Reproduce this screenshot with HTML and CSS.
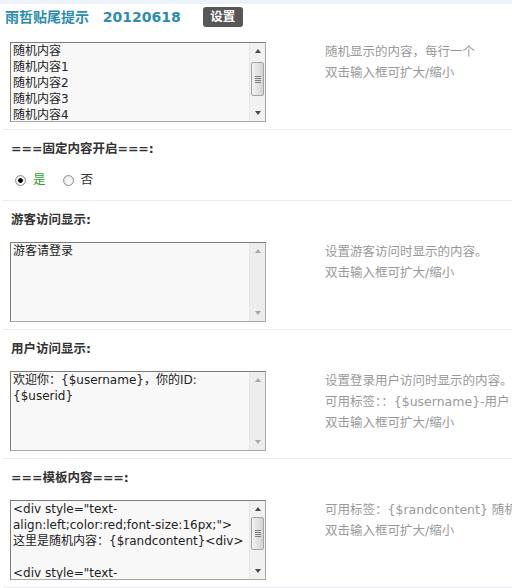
FILE: index.html
```html
<!DOCTYPE html>
<html lang="zh-CN">
<head>
<meta charset="utf-8">
<title>雨哲贴尾提示</title>
<link rel="stylesheet" href="styles.css">
</head>
<body>
<div class="topbar"></div>
<div class="header">
  <h3 class="title">雨哲贴尾提示 20120618</h3>
  <a class="btn" href="#">设置</a>
</div>

<div class="form">
  <div class="row-input first">
    <div class="ta">
      <textarea>随机内容
随机内容1
随机内容2
随机内容3
随机内容4
随机内容5</textarea>
      <div class="sb">
        <div class="sb-btn"><span class="arrow up"></span></div>
        <div class="track"><div class="thumb" style="margin-top:3px;height:34px"><i class="grip"></i><i class="grip"></i><i class="grip"></i><i class="grip"></i></div></div>
        <div class="sb-btn"><span class="arrow down"></span></div>
      </div>
    </div>
    <div class="tips">随机显示的内容，每行一个<br>双击输入框可扩大/缩小</div>
  </div>

  <div class="sec">
    <div class="label">===固定内容开启===:</div>
    <div class="radios">
      <label class="opt on"><input type="radio" name="fixed" checked>是</label>
      <label class="opt"><input type="radio" name="fixed">否</label>
    </div>
  </div>

  <div class="sec">
    <div class="label">游客访问显示:</div>
    <div class="row-input">
      <div class="ta">
        <textarea>游客请登录</textarea>
        <div class="sb off">
          <div class="sb-btn"><span class="arrow up"></span></div>
          <div class="track"></div>
          <div class="sb-btn"><span class="arrow down"></span></div>
        </div>
      </div>
      <div class="tips">设置游客访问时显示的内容。<br>双击输入框可扩大/缩小</div>
    </div>
  </div>

  <div class="sec">
    <div class="label">用户访问显示:</div>
    <div class="row-input">
      <div class="ta">
        <textarea>欢迎你：{$username}，你的ID: {$userid}</textarea>
        <div class="sb off">
          <div class="sb-btn"><span class="arrow up"></span></div>
          <div class="track"></div>
          <div class="sb-btn"><span class="arrow down"></span></div>
        </div>
      </div>
      <div class="tips">设置登录用户访问时显示的内容。<br>可用标签：：{$username}-用户<br>双击输入框可扩大/缩小</div>
    </div>
  </div>

  <div class="sec">
    <div class="label">===模板内容===:</div>
    <div class="row-input">
      <div class="ta">
        <textarea>&lt;div style="text-align:left;color:red;font-size:16px;"&gt;
这里是随机内容：{$randcontent}&lt;div&gt;

&lt;div style="text-align:left;color:blue;font-size:14px;"&gt;
{$randcontent}&lt;div&gt;</textarea>
        <div class="sb">
          <div class="sb-btn"><span class="arrow up"></span></div>
          <div class="track"><div class="thumb" style="margin-top:0;height:33px"><i class="grip"></i><i class="grip"></i><i class="grip"></i><i class="grip"></i></div></div>
          <div class="sb-btn"><span class="arrow down"></span></div>
        </div>
      </div>
      <div class="tips">可用标签：{$randcontent} 随机<br>双击输入框可扩大/缩小</div>
    </div>
  </div>
  <div class="sec"></div>
</div>
</body>
</html>
```

FILE: styles.css
```css
* { box-sizing: border-box; }
html, body {
  margin: 0;
  padding: 0;
  background: #fff;
  overflow: hidden;
}
body {
  width: 512px;
  height: 588px;
  font-family: "DejaVu Sans", "Noto Sans CJK SC", sans-serif;
  font-size: 12.5px;
  color: #333;
}

.topbar {
  height: 4px;
  background: #edf2f9;
}

.header {
  display: flex;
  align-items: center;
  height: 20px;
  margin-top: 3px;
  padding-left: 5px;
}
.title {
  margin: 0;
  font-size: 14px;
  font-weight: bold;
  line-height: 20px;
  color: #2b8cb0;
  word-spacing: 9px;
  white-space: nowrap;
}
.btn {
  margin-left: 22px;
  width: 40px;
  height: 20px;
  border-radius: 3px;
  background: #575757;
  color: #fff;
  font-weight: bold;
  font-size: 12.5px;
  line-height: 20px;
  text-align: center;
  text-decoration: none;
}

.form {
  margin-left: 3px;
}
.sec {
  border-top: 1px solid #e8ebef;
}
.label {
  padding: 11px 0 0 8px;
  line-height: 16px;
  font-weight: bold;
  color: #333;
  white-space: nowrap;
}

.row-input {
  display: flex;
  align-items: flex-start;
  padding: 14px 0 7px 7px;
}
.row-input.first {
  padding-top: 15px;
}

.ta {
  flex: none;
  display: flex;
  width: 256px;
  height: 80px;
  border: 1px solid;
  border-color: #7c7c7c #a9a9a9 #a9a9a9 #7c7c7c;
  background: #f8f8f8;
}
.ta textarea {
  flex: 1;
  min-width: 0;
  margin: 0;
  border: 0;
  padding: 0 1px 0 2px;
  background: transparent;
  resize: none;
  overflow: hidden;
  outline: none;
  font-family: "DejaVu Sans", "Noto Sans CJK SC", sans-serif;
  font-size: 12px;
  line-height: 16px;
  color: #222;
}

.sb {
  flex: none;
  width: 16px;
  display: flex;
  flex-direction: column;
  background: #f1f1f1;
  border-left: 1px solid #e6e6e6;
}
.sb.off {
  background: #ededed;
}
.sb-btn {
  height: 16px;
  display: flex;
  align-items: center;
  justify-content: center;
}
.arrow {
  width: 0;
  height: 0;
  border-left: 3px solid transparent;
  border-right: 3px solid transparent;
}
.arrow.up { border-bottom: 4px solid #4a4a4a; }
.arrow.down { border-top: 4px solid #4a4a4a; }
.sb.off .arrow.up { border-bottom-color: #a8a8a8; }
.sb.off .arrow.down { border-top-color: #a8a8a8; }

.track {
  flex: 1;
  padding: 0 1px;
}
.thumb {
  display: flex;
  flex-direction: column;
  align-items: center;
  justify-content: center;
  gap: 1px;
  border: 1px solid #a3a3a3;
  border-radius: 2px;
  background: linear-gradient(to right, #f2f2f2, #d3d3d3);
}
.grip {
  display: block;
  width: 6px;
  height: 1px;
  background: #7e7e7e;
}

.tips {
  flex: 1;
  min-width: 0;
  margin-left: 59px;
  margin-top: -1px;
  line-height: 21px;
  color: #999;
  white-space: nowrap;
  overflow: hidden;
}

.radios {
  display: flex;
  align-items: center;
  padding: 15px 0 12px 12px;
  line-height: 16px;
}
.opt {
  display: flex;
  align-items: center;
  color: #333;
}
.opt.on {
  color: #2fa62f;
  margin-right: 17px;
}
.opt input {
  -webkit-appearance: none;
  appearance: none;
  width: 11px;
  height: 11px;
  margin: 0 7px 0 0;
  border: 1px solid #8f8f8f;
  border-radius: 50%;
  background: radial-gradient(circle at 60% 60%, #ffffff 0, #dedede 100%);
}
.opt input:checked {
  background:
    radial-gradient(circle, #000 0 2px, transparent 2.6px),
    radial-gradient(circle at 60% 60%, #ffffff 0, #dedede 100%);
}
```
